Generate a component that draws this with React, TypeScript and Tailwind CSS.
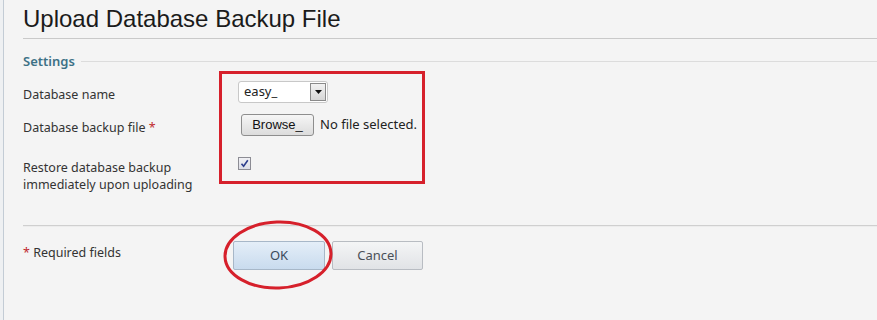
import React from "react";

const labelFont = { fontFamily: '"Noto Sans", "DejaVu Sans", sans-serif' };

function Field({ label, required, children, tall }: { label: React.ReactNode; required?: boolean; children: React.ReactNode; tall?: boolean }) {
  return (
    <div className={`flex ${tall ? "h-[40px]" : "h-[33px]"} items-start`}>
      <div className="w-[215px] text-[12.5px] leading-[17px] text-[#333]">
        {label}
        {required ? <span className="text-[#c0282d]"> *</span> : null}
      </div>
      <div className="flex items-start">{children}</div>
    </div>
  );
}

export default function App() {
  return (
    <div className="relative flex h-[320px] w-[877px] overflow-hidden bg-[#f4f4f4]" style={labelFont}>
      <div className="w-[4px] shrink-0 border-r border-[#c3ccd5] bg-[#eef0f2]" />
      <div className="flex-1 pl-[19px]">
        <h1 className="h-[39px] border-b border-[#c9c9c9] pt-[5px] text-[24px] leading-[28px] text-[#1b1b1b] [font-family:'Liberation_Sans',Arial,sans-serif]">
          Upload Database Backup File
        </h1>

        <div className="mt-[14px] flex items-center">
          <span className="text-[13px] font-semibold leading-[16px] text-[#3d7186]">Settings</span>
          <div className="ml-[6px] h-px flex-1 bg-[#dcdcdc]" />
        </div>

        <div className="mt-[17px]">
          <Field label="Database name">
            <div className="-mt-[5px] flex h-[22px] w-[90px] items-center justify-between rounded-[3px] border border-[#c8c8c8] bg-white pl-[5px] pr-[1px]">
              <span className="text-[13px] text-[#222]">easy_</span>
              <span className="flex h-[18px] w-[16px] items-center justify-center border border-[#8a8a8a] bg-gradient-to-b from-[#f2f2f2] to-[#d6d6d6]">
                <svg width="7" height="4" viewBox="0 0 7 4"><path d="M0 0h7L3.5 4z" fill="#111" /></svg>
              </span>
            </div>
          </Field>
          <Field label="Database backup file" required tall>
            <div className="-mt-[5px] ml-[3px] flex items-center gap-[6px]">
              <span className="flex h-[22px] w-[73px] items-center justify-center rounded-[3px] border border-[#8e8e8e] bg-gradient-to-b from-[#f6f6f6] to-[#dcdcdc] text-[13px] text-[#111] [font-family:'Liberation_Sans',Arial,sans-serif]">
                Browse_
              </span>
              <span className="text-[13px] text-[#222]">No file selected.</span>
            </div>
          </Field>
          <Field label={<>Restore database backup<br />immediately upon uploading</>}>
            <span className="-mt-[2px] flex h-[13px] w-[13px] items-center justify-center border border-[#8c8c94] bg-gradient-to-b from-[#f0f0f4] to-[#dcdde6]">
              <svg width="9" height="9" viewBox="0 0 9 9"><path d="M1.5 4.8L3.6 7.3L7.8 1.2" stroke="#2c3d8c" strokeWidth="1.6" fill="none" /></svg>
            </span>
          </Field>
        </div>

        <div className="mt-[33px] h-[2px] border-t border-[#cfcfcf] bg-[#ececec]" />

        <div className="mt-[14px] flex items-start">
          <div className="mt-[3px] w-[210px] text-[12.5px] text-[#333]">
            <span className="text-[#c0282d]">*</span> Required fields
          </div>
          <div className="flex gap-[7px]">
            <button className="h-[29px] w-[92px] rounded-[2px] border border-[#a7b7c8] bg-gradient-to-b from-[#e4eef8] to-[#c9dbee] text-[13px] text-[#3a4a5c]">
              OK
            </button>
            <button className="h-[29px] w-[91px] rounded-[2px] border border-[#b8bcc2] bg-gradient-to-b from-[#f4f5f6] to-[#e1e3e6] text-[13px] text-[#4a5058]">
              Cancel
            </button>
          </div>
        </div>
      </div>

      {/* annotation marks */}
      <div className="absolute left-[219px] top-[71px] h-[113px] w-[206px] border-[3px] border-[#d6202b]" />
      <svg className="absolute left-[221px] top-[218px]" width="116" height="74" viewBox="0 0 116 74">
        <ellipse cx="57" cy="37" rx="53" ry="33" fill="none" stroke="#d6202b" strokeWidth="3" transform="rotate(-2 57 37)" />
      </svg>
    </div>
  );
}
